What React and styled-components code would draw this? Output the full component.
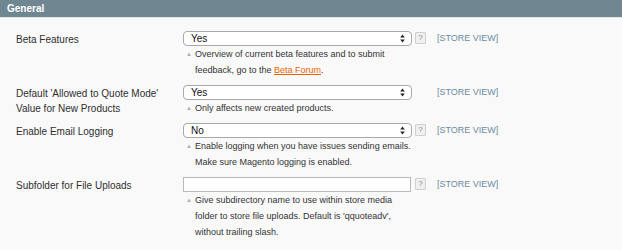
import React from "react";
import styled, { createGlobalStyle } from "styled-components";

const Global = createGlobalStyle`
  html, body { margin: 0; padding: 0; background: #f9f9f9; }
  body { font-family: "Liberation Sans", Arial, Helvetica, sans-serif; color: #2f2f2f; }
`;

const Page = styled.div`
  width: 622px;
  height: 250px;
  background: #f9f9f9;
  overflow: hidden;
`;

const Header = styled.div`
  height: 18px;
  background: #6f8791;
  border-bottom: 1px solid #e3e6e7;
  box-sizing: border-box;
  display: flex;
  align-items: center;
  padding-left: 7px;
  color: #fff;
  font-weight: bold;
  font-size: 10px;
`;

const Form = styled.div`
  display: flex;
  flex-direction: column;
  gap: 7px;
  padding-top: 13px;
`;

const Row = styled.div`
  display: grid;
  grid-template-columns: 167px 229px 25px 1fr;
  padding-left: 16px;
  align-items: start;
`;

const Label = styled.div`
  font-size: 10px;
  line-height: 15px;
  color: #2f2f2f;
  padding-top: 1px;
`;

const Value = styled.div`
  display: flex;
  flex-direction: column;
`;

const SelectBox = styled.div`
  height: 15px;
  box-sizing: border-box;
  border: 1px solid #a9a9a9;
  border-radius: 4px;
  background: #fff;
  display: flex;
  align-items: center;
  justify-content: space-between;
  padding: 0 6px 0 7px;
  font-size: 10px;
  color: #111;
  font-weight: 500;
`;

const TextBox = styled.div`
  height: 15px;
  box-sizing: border-box;
  border: 1px solid #b9b9b9;
  background: #fff;
  width: 228px;
`;

const Note = styled.div`
  font-size: 9px;
  line-height: 16px;
  color: #333;
  padding-left: 12px;
  &::before {
    content: "▲";
    display: inline-block;
    width: 9px;
    margin-left: -9px;
    font-size: 6px;
    color: #a7b0b5;
    vertical-align: 1px;
  }
`;

const Link = styled.a`
  color: #eb6200;
  text-decoration: underline;
`;

const HelpCell = styled.div`
  padding-left: 3px;
  padding-top: 1px;
`;

const Help = styled.div`
  width: 11px;
  height: 12px;
  box-sizing: border-box;
  border: 1px solid #cfcfcf;
  border-radius: 1px;
  background: #efefef;
  color: #8a8a8a;
  font-size: 8px;
  line-height: 10px;
  text-align: center;
`;

const Scope = styled.div`
  font-size: 9px;
  line-height: 15px;
  color: #6d8aa0;
`;

const Arrows = () => (
  <svg width="5" height="9" viewBox="0 0 5 9">
    <path d="M2.5 0.5 L4.8 3.6 L0.2 3.6 Z" fill="#222" />
    <path d="M2.5 8.5 L4.8 5.4 L0.2 5.4 Z" fill="#222" />
  </svg>
);

const Select = ({ value }) => (
  <SelectBox>
    <span>{value}</span>
    <Arrows />
  </SelectBox>
);

const rows = [
  {
    label: "Beta Features",
    control: <Select value="Yes" />,
    help: true,
    notes: [
      "Overview of current beta features and to submit",
      <>
        feedback, go to the <Link href="#">Beta Forum</Link>.
      </>,
    ],
  },
  {
    label: (
      <>
        Default 'Allowed to Quote Mode'
        <br />
        Value for New Products
      </>
    ),
    control: <Select value="Yes" />,
    help: false,
    notes: ["Only affects new created products."],
  },
  {
    label: "Enable Email Logging",
    control: <Select value="No" />,
    help: true,
    notes: [
      "Enable logging when you have issues sending emails.",
      "Make sure Magento logging is enabled.",
    ],
  },
  {
    label: "Subfolder for File Uploads",
    control: <TextBox />,
    help: true,
    notes: [
      "Give subdirectory name to use within store media",
      "folder to store file uploads. Default is 'qquoteadv',",
      "without trailing slash.",
    ],
  },
];

export default function App() {
  return (
    <Page>
      <Global />
      <Header>General</Header>
      <Form>
        {rows.map((r, i) => (
          <Row key={i}>
            <Label>{r.label}</Label>
            <Value>
              {r.control}
              <Note>
                {r.notes.map((n, j) => (
                  <React.Fragment key={j}>
                    {j > 0 && <br />}
                    {n}
                  </React.Fragment>
                ))}
              </Note>
            </Value>
            <HelpCell>{r.help && <Help>?</Help>}</HelpCell>
            <Scope>[STORE VIEW]</Scope>
          </Row>
        ))}
      </Form>
    </Page>
  );
}
